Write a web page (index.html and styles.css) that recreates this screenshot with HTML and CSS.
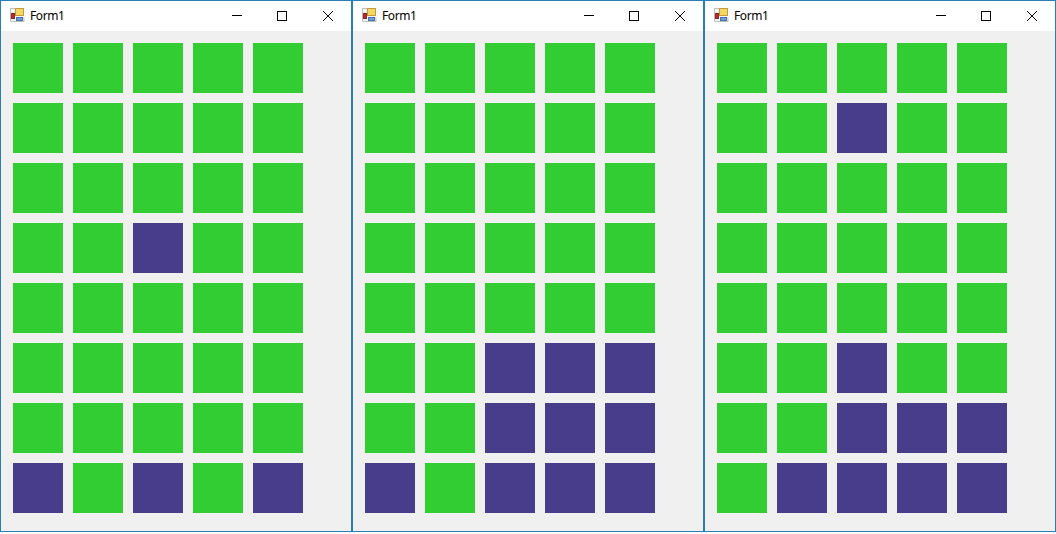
FILE: index.html
```html
<!DOCTYPE html>
<html lang="en">
<head>
<meta charset="utf-8">
<title>Form1</title>
<link rel="stylesheet" href="styles.css">
</head>
<body>
<main class="desktop" id="desktop"></main>
<template id="win">
  <section class="window">
    <header class="titlebar">
      <svg class="app-icon" width="16" height="16" viewBox="0 0 16 16">
        <path d="M0.5 1.5H6M0.5 1.5V14.5H14V10" fill="#f7f7f7" stroke="#bdbdbd"/>
        <rect x="5.5" y="1.5" width="8" height="7" fill="#f5d566" stroke="#c79c35"/>
        <rect x="1.5" y="6.5" width="3" height="5" fill="#c0312f" stroke="#8a2222"/>
        <rect x="6.5" y="10.5" width="6" height="3" fill="#6f9cdc" stroke="#4a70ae"/>
      </svg>
      <span class="title">Form1</span>
      <div class="controls">
        <svg class="ctl" width="46" height="30" viewBox="0 0 46 30"><path d="M19 14.5h10" stroke="#000" fill="none"/></svg>
        <svg class="ctl" width="46" height="30" viewBox="0 0 46 30"><rect x="18.5" y="10.5" width="9" height="9" stroke="#000" fill="none"/></svg>
        <svg class="ctl" width="46" height="30" viewBox="0 0 46 30"><path d="M18 10l10 10M28 10l-10 10" stroke="#000" fill="none"/></svg>
      </div>
    </header>
    <div class="board"></div>
  </section>
</template>
<script src="app.js"></script>
</body>
</html>
```
FILE: styles.css
```css
html, body { margin: 0; padding: 0; background: #fff; }
body { width: 1056px; height: 534px; overflow: hidden; }
.desktop { display: flex; width: 1056px; height: 532px; }
.window {
  box-sizing: border-box;
  width: 352px;
  height: 532px;
  border: 1px solid #2b7fb8;
  background: #f0f0f0;
  display: flex;
  flex-direction: column;
}
.titlebar {
  height: 30px;
  background: #fff;
  display: flex;
  align-items: center;
  flex: none;
}
.app-icon { margin: 0 0 2px 9px; flex: none; }
.title {
  margin: 0 0 2px 4px;
  font: 12px "Noto Sans", "Open Sans", sans-serif;
  letter-spacing: -0.4px;
  color: #000;
}
.controls { margin-left: auto; display: flex; }
.ctl { display: block; flex: none; }
.board {
  display: grid;
  grid-template-columns: repeat(5, 50px);
  grid-auto-rows: 50px;
  gap: 10px;
  padding: 12px 0 0 12px;
}
.cell { background: #32cd32; }
.cell.on { background: #483d8b; }
```
FILE: app.js
```js
const boards = [
  ["00000","00000","00000","00100","00000","00000","00000","10101"],
  ["00000","00000","00000","00000","00000","00111","00111","10111"],
  ["00000","00100","00000","00000","00000","00100","00111","01111"]
];
const desktop = document.getElementById("desktop");
const tpl = document.getElementById("win");
for (const rows of boards) {
  const node = tpl.content.cloneNode(true);
  const board = node.querySelector(".board");
  for (const row of rows) {
    for (const c of row) {
      const d = document.createElement("div");
      d.className = c === "1" ? "cell on" : "cell";
      board.appendChild(d);
    }
  }
  desktop.appendChild(node);
}
```
